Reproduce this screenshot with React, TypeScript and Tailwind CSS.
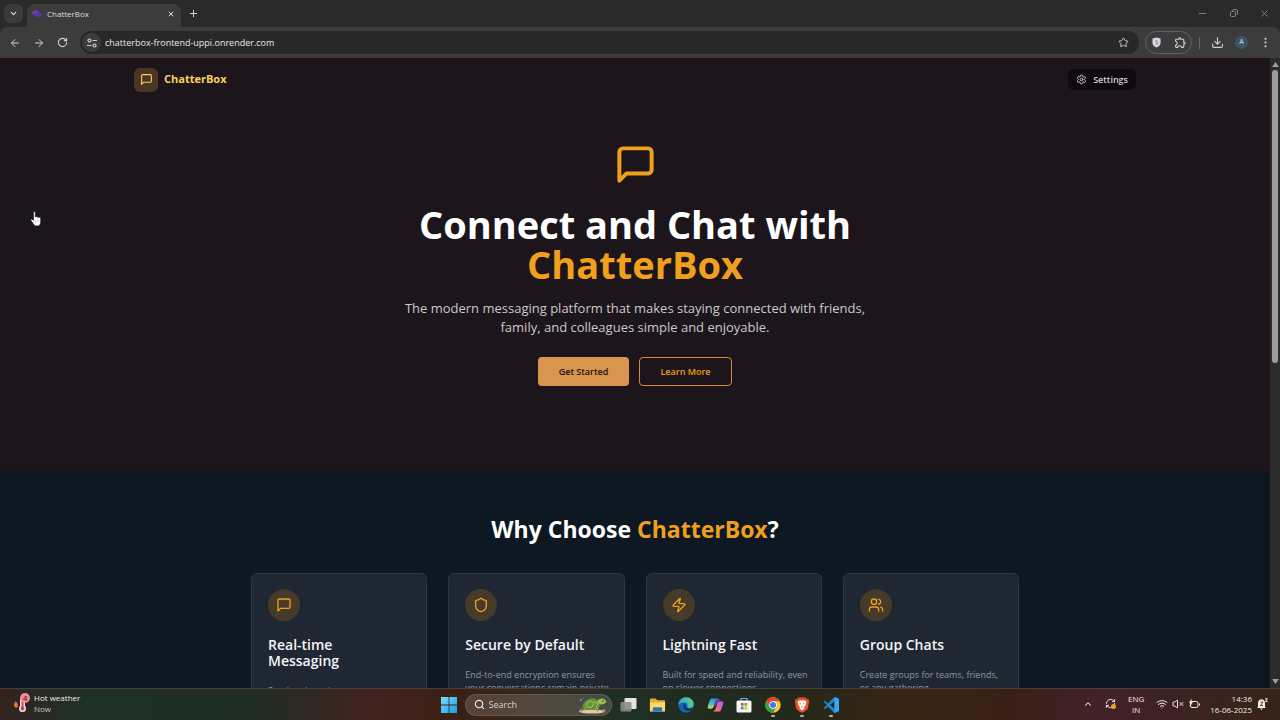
import React from "react";
import {
  ArrowLeft,
  ArrowRight,
  ChevronDown,
  ChevronUp,
  Download,
  EllipsisVertical,
  Minus,
  Plus,
  RefreshCw,
  RotateCw,
  Search,
  Settings,
  Shield,
  Star,
  Users,
  VolumeX,
  Wifi,
  X,
  Zap,
} from "lucide-react";
import { MdOutlineExtension } from "react-icons/md";

function MessageSquare({ size, strokeWidth = 2 }: { size: number; strokeWidth?: number }) {
  return (
    <svg width={size} height={size} viewBox="0 0 24 24" fill="none" stroke="currentColor" strokeWidth={strokeWidth} strokeLinecap="round" strokeLinejoin="round">
      <path d="M21 15a2 2 0 0 1-2 2H7l-4 4V5a2 2 0 0 1 2-2h14a2 2 0 0 1 2 2z" />
    </svg>
  );
}

function Favicon() {
  return (
    <svg viewBox="0 0 12 12" className="size-3">
      <path d="M1 4.500c0-2 4-3 6-1.500 1 .8 1 2.500 0 3.300C5 8 1 7 1 4.500z" fill="#7d3a9c" />
      <path d="M3 6.500c1-2 7-2.500 8 0 .6 2-2 2.600-4 2.300C5 8.700 3 8 3 6.500z" fill="#4a3bb5" />
    </svg>
  );
}

function TabStrip() {
  return (
    <div className="flex h-[27px] shrink-0 items-end bg-[#2a2a2a] pl-1">
      <button aria-label="Search tabs" className="mb-1 flex size-[19px] items-center justify-center rounded-md bg-[#3a3a3a] text-[#e0e0e0]">
        <ChevronDown size={9} strokeWidth={3} />
      </button>
      <div className="ml-1 flex h-[23px] w-[154px] items-center rounded-t-lg bg-[#3c3c3c] pr-1 pb-1 pl-1 text-[8px] text-[#dedede]">
        <Favicon />
        <span className="ml-1 flex-1">ChatterBox</span>
        <button aria-label="Close tab" className="p-0.5">
          <X size={8} strokeWidth={3} />
        </button>
      </div>
      <button aria-label="New tab" className="ml-1 flex h-[27px] w-4 items-center justify-center text-[#dedede]">
        <Plus size={11} />
      </button>
      <div className="flex h-[27px] flex-1 items-center justify-end gap-5 pr-2.5 text-[#858585]">
        <button aria-label="Minimize"><Minus size={11} strokeWidth={2} /></button>
        <button aria-label="Restore">
          <svg viewBox="0 0 11 11" className="size-[11px]" fill="none" stroke="currentColor">
            <rect x="2.500" y="3.500" width="5" height="5" rx="1" />
            <path d="M4.500 2.500a1 1 0 0 1 1-1h2.500a1.500 1.500 0 0 1 1.500 1.500v2.500a1 1 0 0 1-1 1" />
          </svg>
        </button>
        <button aria-label="Close"><X size={11} strokeWidth={2} /></button>
      </div>
    </div>
  );
}

function Toolbar() {
  return (
    <div className="flex h-[31px] shrink-0 items-center rounded-t-lg bg-[#3c3c3c] pr-2 pl-[9px] text-[#d0d0d0]">
      <div className="flex items-center gap-3">
        <button aria-label="Back"><ArrowLeft size={12} /></button>
        <button aria-label="Forward"><ArrowRight size={12} /></button>
        <button aria-label="Reload"><RotateCw size={11} strokeWidth={2.4} /></button>
      </div>
      <div className="ml-3 flex h-[23px] flex-1 items-center rounded-full bg-[#282828] pr-2.5 pl-0.5">
        <button aria-label="Site information" className="flex size-[19px] items-center justify-center rounded-full bg-[#3c3c3c]">
          <svg viewBox="0 0 12 12" className="size-3" fill="none" stroke="currentColor" strokeWidth="1.200">
            <circle cx="3.500" cy="3.500" r="1.500" />
            <path d="M6.500 3.500H11M1 8.500h4.500" />
            <circle cx="8.500" cy="8.500" r="1.500" />
          </svg>
        </button>
        <input aria-label="Address" defaultValue="chatterbox-frontend-uppi.onrender.com" className="ml-1 min-w-0 flex-1 bg-transparent text-[9px] text-[#e8e8e8] outline-none" />
        <button aria-label="Bookmark"><Star size={11} /></button>
      </div>
      <div className="ml-1.5 flex h-[23px] w-[47px] items-center justify-between rounded-full border border-[#626262] pr-1 pl-1.5">
        <button aria-label="Shield">
          <svg viewBox="0 0 10 12" className="h-[11px] w-[9px]">
            <path d="M5 0.500 9.500 1.500V6c0 3-2 4.500-4.500 5.500C2.500 10.500.5 9 .5 6V1.500z" fill="#d4dae0" />
            <path d="M6.500 4H4.200v2h2.300v2H3.800" fill="none" stroke="#7f8d9b" strokeWidth=".9" />
          </svg>
        </button>
        <button aria-label="Extensions"><MdOutlineExtension size={13} /></button>
      </div>
      <span className="ml-[7px] h-3 w-px bg-[#666666]" />
      <button aria-label="Downloads" className="ml-[11px]"><Download size={13} /></button>
      <button aria-label="Profile" className="ml-[11px] flex size-[13px] items-center justify-center rounded-full bg-[#3d5563] text-[7px] text-[#dce8ee]">A</button>
      <button aria-label="Menu" className="ml-[11px]"><EllipsisVertical size={13} /></button>
    </div>
  );
}

const features = [
  { icon: MessageSquare, title: "Real-time Messaging", text: "Send and receive messages instantly." },
  { icon: Shield, title: "Secure by Default", text: "End-to-end encryption ensures your conversations remain private." },
  { icon: Zap, title: "Lightning Fast", text: "Built for speed and reliability, even on slower connections." },
  { icon: Users, title: "Group Chats", text: "Create groups for teams, friends, or any gathering." },
];

function Page() {
  return (
    <div className="min-w-0 flex-1 overflow-hidden bg-[#0e1823]">
      <div className="bg-[#1d151c] pb-[85px]">
        <header className="mx-auto flex h-[43px] max-w-[1024px] items-center justify-between px-[11px]">
          <a href="#home" className="flex items-center gap-1.5 text-[11px] font-bold text-[#ffcf5c]">
            <span className="flex size-6 items-center justify-center rounded-md bg-[#493723]">
              <MessageSquare size={13} />
            </span>
            ChatterBox
          </a>
          <button className="flex h-[21px] items-center gap-1.5 rounded-md bg-[#100a10] px-2 text-[9px] font-semibold text-[#d2cdd1]">
            <Settings size={11} />
            Settings
          </button>
        </header>
        <main className="flex flex-col items-center pt-[42px] text-center">
          <span className="text-[#f0a01c]"><MessageSquare size={43} strokeWidth={2.2} /></span>
          <h1 className="mt-[18px] text-[38px] leading-[40px] font-bold text-white">
            Connect and Chat with
            <span className="block text-[#f0a01c]">ChatterBox</span>
          </h1>
          <p className="mt-[15px] max-w-[480px] text-[13px] leading-[19px] text-[#cbc8ca]">
            The modern messaging platform that makes staying connected with friends, family, and colleagues simple and enjoyable.
          </p>
          <div className="mt-5 flex gap-2.5 text-[9px] font-semibold">
            <button className="h-[29px] w-[91px] rounded bg-[#d9944e] text-[#1c120a]">Get Started</button>
            <button className="h-[29px] w-[93px] rounded border border-[#d88b32] text-[#f39c1e]">Learn More</button>
          </div>
        </main>
      </div>
      <section className="mx-auto max-w-[768px] pt-[42px]">
        <h2 className="text-center text-[23px] leading-8 font-bold text-white">
          Why Choose <span className="text-[#f0a01c]">ChatterBox</span>?
        </h2>
        <div className="mt-7 grid grid-cols-4 gap-[21px]">
          {features.map(({ icon: Icon, title, text }) => (
            <article key={title} className="rounded-md border border-[#2d3741] bg-[#1e2732] pt-[15px] pr-2.5 pb-8 pl-4">
              <span className="flex size-8 items-center justify-center rounded-full bg-[#463b29] text-[#eda021]">
                <Icon size={16} />
              </span>
              <h3 className="mt-4 max-w-[130px] text-[14px] leading-4 font-semibold text-[#f3f5f7]">{title}</h3>
              <p className="mt-[15px] text-[9px] leading-[13px] text-[#8d97a5]">{text}</p>
            </article>
          ))}
        </div>
      </section>
    </div>
  );
}

function Scrollbar() {
  return (
    <div className="flex w-[10px] shrink-0 flex-col items-center bg-[#2c2c2c] py-1">
      <svg viewBox="0 0 8 6" className="h-[5px] w-[7px]"><path d="M4 0l4 6H0z" fill="#a0a0a0" /></svg>
      <div className="mt-[3px] h-[293px] w-1.5 rounded-full bg-[#9c9c9c]" />
      <svg viewBox="0 0 8 6" className="mt-auto h-[5px] w-[7px]"><path d="M4 6L0 0h8z" fill="#a0a0a0" /></svg>
    </div>
  );
}

function HandCursor() {
  return (
    <svg viewBox="0 0 12 16" className="pointer-events-none absolute top-[153px] left-[30px] h-4 w-3">
      <path d="M3.500 1.500c0-1.300 1.800-1.300 1.800 0V6c.4-.6 1.500-.5 1.800.2.500-.5 1.500-.4 1.700.4.700-.5 1.900-.2 1.900.9V11c0 2.500-1.300 4-3.700 4-2 0-2.800-.7-3.700-2.200L1 9.500c-.6-1 .5-1.800 1.300-1.100l1.200 1.100z" fill="#fff" stroke="#111" strokeWidth=".6" />
      <path d="M5.500 9v2.500M7.200 9v2.500M8.900 9v2.500" stroke="#9a9a9a" strokeWidth=".4" />
    </svg>
  );
}

function WindowsLogo() {
  return (
    <svg viewBox="0 0 16 16" className="size-4">
      <defs>
        <linearGradient id="win" x1="0" y1="0" x2="1" y2="1"><stop stopColor="#7fdcff" /><stop offset="1" stopColor="#139ee8" /></linearGradient>
      </defs>
      <path d="M0 0h7.600v7.600H0zM8.400 0H16v7.600H8.400zM0 8.400h7.600V16H0zM8.400 8.400H16V16H8.400z" fill="url(#win)" />
    </svg>
  );
}

function Turtle() {
  return (
    <svg viewBox="0 0 30 18" className="h-[18px] w-[30px] shrink-0">
      <ellipse cx="15" cy="15.500" rx="13" ry="2" fill="#e6c8a4" />
      <circle cx="4" cy="14" r="1.500" fill="#c75da0" /><circle cx="27" cy="14.500" r="1.500" fill="#dc6d7a" />
      <path d="M5 12C6 5 12 1.500 17 2.500c4 1 6 4 6 8-5 3-12 3.500-18 1.500z" fill="#5f9138" />
      <path d="M9 8l4-3 4 2-2 4-4 .5zM17 5l4 3-2 3" fill="none" stroke="#b4c657" strokeWidth="1" />
      <path d="M20 6c1-4 7-5 9-1 .5 2-2 3.500-6 3.500z" fill="#9cc04c" />
      <path d="M8 12l-4 3 6-1zM17 12l4 4 1-5z" fill="#82a942" />
      <circle cx="26" cy="5" r=".7" fill="#1d2914" />
      <circle cx="4" cy="4" r="1" fill="#55a8c8" /><circle cx="6" cy="2" r=".6" fill="#55a8c8" />
    </svg>
  );
}

function TaskView() {
  return (
    <svg viewBox="0 0 17 16" className="h-4 w-[17px]">
      <rect x="4.500" y="1" width="12" height="11" rx="1" fill="#e3e3e3" />
      <rect x="0.500" y="5" width="11" height="9.500" rx="1" fill="#8c8c8c" fillOpacity=".9" />
    </svg>
  );
}

function Explorer() {
  return (
    <svg viewBox="0 0 18 16" className="h-4 w-[18px]">
      <path d="M1 2.500C1 1.500 1.500 1 2.500 1H7l2 2h7c.7 0 1 .4 1 1v10.500H1z" fill="#e8a92c" />
      <path d="M1 5h16v9c0 .6-.4 1-1 1H2c-.6 0-1-.4-1-1z" fill="#ffd768" />
      <path d="M4 15v-3c0-1 .6-1.500 1.500-1.500h7c.9 0 1.500.5 1.500 1.500v3z" fill="#2479bd" />
    </svg>
  );
}

function Edge() {
  return (
    <svg viewBox="0 0 16 16" className="size-4">
      <defs>
        <linearGradient id="edge" x1="0" x2="1" y1="0.300" y2="0"><stop stopColor="#2ba9e0" /><stop offset="1" stopColor="#62d36f" /></linearGradient>
      </defs>
      <circle cx="8" cy="8" r="7.700" fill="#1464b4" />
      <path d="M.3 8C.6 3.500 4 .3 8 .3c5 0 7.700 3.500 7.700 6.700 0 2.500-2 4-4.200 4-1.700 0-2.700-.7-2.300-1.500 1.300-2.500-.5-4-3-4C3.500 5.500 1 6.500.3 8z" fill="url(#edge)" />
      <path d="M6 6.500c-2 3.500 0 7.500 4.500 7.500 1.800 0 3-.8 4-1.800C12 13 8 12.500 8 9.500c0-1.500-.7-2.500-2-3z" fill="#0c3d78" />
      <path d="M8.200 8.500c-.7 3 2.800 4.200 7 2.500l-1 1.500c-4 1.500-7.200-.5-6-4z" fill="#252820" />
    </svg>
  );
}

function Copilot() {
  return (
    <svg viewBox="0 0 18 16" className="h-4 w-[18px]">
      <defs>
        <linearGradient id="cpa" x1="0" x2="0" y1="0" y2="1"><stop stopColor="#2793ea" /><stop offset=".55" stopColor="#53c2a6" /><stop offset="1" stopColor="#f2ca45" /></linearGradient>
        <linearGradient id="cpb" x1="1" x2="0" y1="0" y2="1"><stop stopColor="#9b61e8" /><stop offset=".55" stopColor="#ec6099" /><stop offset="1" stopColor="#f6a153" /></linearGradient>
      </defs>
      <path d="M5.500 1h6C9 2 8.500 5 7.500 8.500 7 11 6 12 4 12H2.500C.5 12 .5 10 1 8.500l2-5.500c.5-1.300 1.200-2 2.500-2z" fill="url(#cpa)" />
      <path d="M12.500 15h-6c2.500-1 3-4 4-7.500C11 5 12 4 14 4h1.500c2 0 2 2 1.500 3.500L15 13c-.5 1.300-1.200 2-2.500 2z" fill="url(#cpb)" />
      <path d="M9 1h2.500c1.200 0 1.800 1 2.200 3-2.200 0-3 1-3.700 3.500L9 9H7.500z" fill="#4b4fd0" />
    </svg>
  );
}

function Store() {
  return (
    <svg viewBox="0 0 16 16" className="size-4">
      <path d="M5 4V1.500h6V4" fill="none" stroke="#50b8e8" strokeWidth="1.200" />
      <rect x=".5" y="3.500" width="15" height="12" rx="1.500" fill="#f4f4f4" />
      <path d="M4.800 6h2.800v2.800H4.800z" fill="#ee5533" /><path d="M8.400 6h2.800v2.800H8.400z" fill="#70b52a" />
      <path d="M4.800 9.600h2.800v2.800H4.800z" fill="#269ad9" /><path d="M8.400 9.600h2.800v2.800H8.400z" fill="#f5b51e" />
    </svg>
  );
}

function Chrome() {
  return (
    <svg viewBox="0 0 16 16" className="size-4">
      <circle cx="8" cy="8" r="7.700" fill="#f9c731" />
      <path d="M1.300 4.200A7.700 7.700 0 0 1 14.700 4.200H8L4.700 9.900z" fill="#e34133" />
      <path d="M1.300 4.200A7.700 7.700 0 0 0 8 15.700L11.300 9.900 8 11.700 4.700 9.900z" fill="#2ba24c" />
      <circle cx="8" cy="8" r="3.800" fill="#fff" /><circle cx="8" cy="8" r="3" fill="#3879e8" />
    </svg>
  );
}

function Brave() {
  return (
    <svg viewBox="0 0 16 16" className="size-4">
      <path d="M4.500.5h7l1.500 1.700 1.500-.2.5 2.500-1 6.500c-.5 2-4 4-6 4.700-2-.7-5.500-2.700-6-4.700L1 4.500 1.500 2l1.500.2z" fill="#f04e26" />
      <path d="M3.500 4.500l2-1h5l2 1-1 4-1.500 1.500.5 1.500L8 13.500 5.500 11.500 6 10 4.500 8.500z" fill="#fff" />
      <path d="M5 5.700l2 .8v1.300zM11 5.700l-2 .8v1.300zM6.800 9.500h2.400L8 10.800z" fill="#f04e26" />
    </svg>
  );
}

function VSCode() {
  return (
    <svg viewBox="0 0 16 16" className="size-4">
      <path d="M11.500 0L16 2v12l-4.500 2L5 9.700 2 12l-1.500-.8L4 8 .5 4.800 2 4l3 2.300zM11.500 4.300L7 8l4.500 3.700z" fill="#1f86d2" fillRule="evenodd" />
      <path d="M11.500 0L16 2v12l-4.500 2z" fill="#35a9f2" />
    </svg>
  );
}

const apps = [
  { name: "Task view", icon: TaskView, running: false },
  { name: "File Explorer", icon: Explorer, running: false },
  { name: "Edge", icon: Edge, running: false },
  { name: "Copilot", icon: Copilot, running: false },
  { name: "Store", icon: Store, running: false },
  { name: "Chrome", icon: Chrome, running: true },
  { name: "Brave", icon: Brave, running: true },
  { name: "VS Code", icon: VSCode, running: true },
];

function Taskbar() {
  return (
    <footer className="grid h-8 shrink-0 grid-cols-[1fr_auto_1fr] items-center border-t border-[#4a3c38] bg-[linear-gradient(90deg,#33231f_0%,#1d3028_7%,#1f2d24_20%,#43221f_29%,#3a2014_36%,#35281e_42%,#1e3024_49%,#22281c_61%,#382414_70%,#3a2018_80%,#44212a_86%,#38231a_97%)] text-[9px] text-[#ececec]">
      <button className="flex items-center gap-0.5 pb-1 pl-3 text-left text-[8px] leading-[11px]">
        <svg viewBox="0 0 20 22" className="h-[22px] w-5">
          <path d="M2 13c0-2 1-2 1.500-4C5.500 11 6 12 6 13.500c0 3-4 3-4-.5z" fill="#e67335" />
          <rect x="8" y="5" width="5" height="12" rx="2.500" fill="#f4e2e6" /><circle cx="10.500" cy="16.500" r="3.500" fill="#f4e2e6" />
          <path d="M10.500 9v7" stroke="#d43d60" strokeWidth="2" /><circle cx="10.500" cy="16.500" r="2" fill="#d43d60" />
          <circle cx="13" cy="6" r="5" fill="#f28b95" />
          <text x="13" y="9" textAnchor="middle" fontSize="8" fill="#3b1419">4</text>
        </svg>
        <span>Hot weather<span className="block text-[#c5c5c5]">Now</span></span>
      </button>
      <div className="flex items-center">
        <button aria-label="Start"><WindowsLogo /></button>
        <label className="ml-2 flex h-[22px] w-[147px] items-center rounded-full border border-white/10 bg-white/15 pr-1 pl-2">
          <Search size={11} strokeWidth={2.5} />
          <input aria-label="Search" placeholder="Search" className="ml-1 w-full min-w-0 flex-1 bg-transparent text-[9px] outline-none placeholder:text-[#d5d1cb]" />
          <Turtle />
        </label>
        <div className="ml-2 flex gap-3">
          {apps.map(({ name, icon: Icon, running }) => (
            <button key={name} aria-label={name} className="relative flex w-[17px] justify-center">
              <Icon />
              {running && <span className="absolute -bottom-1 h-0.5 w-1 rounded-full bg-[#b8b1ad]" />}
            </button>
          ))}
        </div>
      </div>
      <div className="flex items-center justify-end pr-3 pb-0.5 text-[8px] leading-[11px]">
        <ChevronUp size={10} strokeWidth={2.5} />
        <span className="relative ml-3">
          <RefreshCw size={11} />
          <span className="absolute right-0 bottom-0 size-[5px] rounded-full bg-[#f5a01f]" />
        </span>
        <span className="ml-3 text-center">ENG<br />IN</span>
        <span className="ml-3 flex gap-1">
          <Wifi size={12} />
          <VolumeX size={12} />
          <svg viewBox="0 0 12 12" className="size-3" fill="none" stroke="currentColor">
            <rect x="2.500" y="3.500" width="7.500" height="6" rx="1.500" />
            <path d="M11.500 5.500v2" />
            <path d="M3.500.5L1 5h1.500L1.500 8.500 5 4.500H3.500z" fill="currentColor" stroke="none" />
          </svg>
        </span>
        <time className="ml-2.5 text-right">14:36<br />16-06-2025</time>
        <svg viewBox="0 0 12 12" className="ml-1 size-3">
          <path d="M2 9V5c0-5 7-5 7 0v4l1 1H1zM4 10.500h3L5.500 12z" fill="#ececec" />
          <path d="M4.500 4H7L4.500 7.500H7" stroke="#3a211c" strokeWidth=".8" fill="none" /><path d="M9 .8h2.500L9.500 3.500h2" stroke="#ececec" fill="none" />
        </svg>
      </div>
    </footer>
  );
}

export default function App() {
  return (
    <div className="flex h-screen flex-col overflow-hidden bg-[#2a2a2a] font-['Open_Sans','Noto_Sans',sans-serif]">
      <TabStrip />
      <Toolbar />
      <div className="relative flex min-h-0 flex-1">
        <Page />
        <Scrollbar />
        <HandCursor />
      </div>
      <Taskbar />
    </div>
  );
}
